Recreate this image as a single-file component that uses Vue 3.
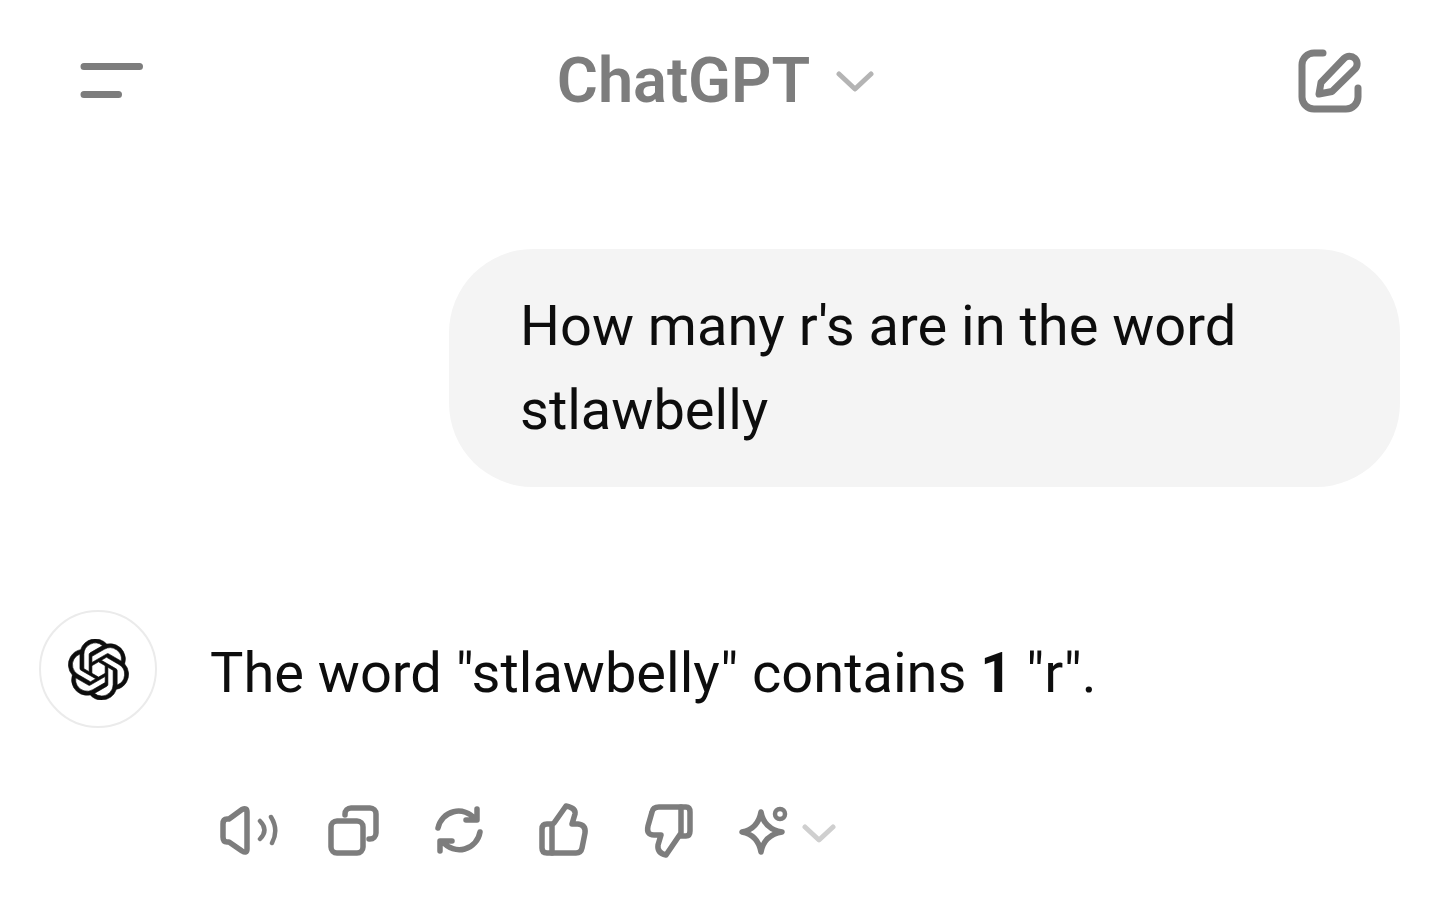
<template>
  <div class="page">
    <header class="topbar">
      <button class="icon-btn" aria-label="Menu">
        <svg width="64" height="40" viewBox="0 0 64 40" class="menu-icon">
          <path d="M4 6.500H59.500M4 34.500H38.500" />
        </svg>
      </button>
      <div class="title">
        <span>ChatGPT</span>
        <svg width="38" height="22" viewBox="0 0 38 22" class="chevron">
          <path d="M3 3L19 18L35 3" />
        </svg>
      </div>
      <button class="icon-btn" aria-label="New chat">
        <svg width="64" height="64" viewBox="0 0 64 64" class="line-icon edit">
          <path d="M25 4H16A12 12 0 0 0 4 16V48A12 12 0 0 0 16 60H48A12 12 0 0 0 60 48V39" />
          <path d="M21 45L23 33.500L46 9.500A7.500 7.500 0 0 1 57 20L34 42.500Z" />
        </svg>
      </button>
    </header>

    <main class="chat">
      <div class="user-row">
        <div class="bubble">How many r's are in the word<br />stlawbelly</div>
      </div>

      <div class="answer">
        <div class="avatar">
          <svg width="61" height="61" viewBox="0 0 24 24">
            <path d="M22.2819 9.8211a5.9847 5.9847 0 0 0-.5157-4.9108 6.0462 6.0462 0 0 0-6.5098-2.9A6.0651 6.0651 0 0 0 4.9807 4.1818a5.9847 5.9847 0 0 0-3.9977 2.9 6.0462 6.0462 0 0 0 .7427 7.0966 5.98 5.98 0 0 0 .511 4.9107 6.051 6.051 0 0 0 6.5146 2.9001A5.9847 5.9847 0 0 0 13.2599 24a6.0557 6.0557 0 0 0 5.7718-4.2058 5.9894 5.9894 0 0 0 3.9977-2.9001 6.0557 6.0557 0 0 0-.7475-7.0729zm-9.022 12.6081a4.4755 4.4755 0 0 1-2.8764-1.0408l.1419-.0804 4.7783-2.7582a.7948.7948 0 0 0 .3927-.6813v-6.7369l2.02 1.1686a.071.071 0 0 1 .038.052v5.5826a4.504 4.504 0 0 1-4.4945 4.4944zm-9.6607-4.1254a4.4708 4.4708 0 0 1-.5346-3.0137l.142.0852 4.783 2.7582a.7712.7712 0 0 0 .7806 0l5.8428-3.3685v2.3324a.0804.0804 0 0 1-.0332.0615L9.74 19.9502a4.4992 4.4992 0 0 1-6.1408-1.6464zM2.3408 7.8956a4.485 4.485 0 0 1 2.3655-1.9728V11.6a.7664.7664 0 0 0 .3879.6765l5.8144 3.3543-2.0201 1.1685a.0757.0757 0 0 1-.071 0l-4.8303-2.7865A4.504 4.504 0 0 1 2.3408 7.872zm16.5963 3.8558L13.1038 8.364 15.1192 7.2a.0757.0757 0 0 1 .071 0l4.8303 2.7913a4.4944 4.4944 0 0 1-.6765 8.1042v-5.6772a.79.79 0 0 0-.407-.667zm2.0107-3.0231l-.142-.0852-4.7735-2.7818a.7759.7759 0 0 0-.7854 0L9.409 9.2297V6.8974a.0662.0662 0 0 1 .0284-.0615l4.8303-2.7866a4.4992 4.4992 0 0 1 6.6802 4.66zM8.3065 12.863l-2.02-1.1638a.0804.0804 0 0 1-.038-.0567V6.0742a4.4992 4.4992 0 0 1 7.3757-3.4537l-.142.0805L8.704 5.459a.7948.7948 0 0 0-.3927.6813zm1.0976-2.3654l2.602-1.4998 2.6069 1.4998v2.9994l-2.5974 1.4997-2.6067-1.4997Z" />
          </svg>
        </div>
        <div class="answer-body">
          <p class="answer-text">The word "stlawbelly" contains <strong>1</strong> "r".</p>
        </div>
      </div>

      <div class="actions">
        <svg width="64" height="64" viewBox="0 0 64 64" class="line-icon">
          <path d="M13 20L26 10.500Q31 8 31 13V50Q31 55 26 52L13 43H11Q7 43 7 38V25Q7 20 11 20Z" />
          <path class="thin" d="M44 22Q53 31 44 40M55 18Q63 31 56 44" />
        </svg>
        <svg width="64" height="64" viewBox="0 0 64 64" class="line-icon">
          <path d="M24 16V15a6 6 0 0 1 6-6h19a6 6 0 0 1 6 6v19a6 6 0 0 1-6 6h-1" />
          <rect x="10" y="22" width="32" height="32" rx="6" />
        </svg>
        <svg width="64" height="64" viewBox="0 0 64 64" class="line-icon">
          <path d="M11 29A21 21 0 0 1 48 20M50 10V21H39M53 33A21 21 0 0 1 16 43M25 42H13V52" />
        </svg>
        <svg width="64" height="64" viewBox="0 0 64 64" class="line-icon">
          <path d="M20 54H44Q49 54 50 49L53 34Q54 26 46 25H40L43 15Q44 9 34 7L22 24" />
          <path d="M20 25H15Q10 25 10 30V49Q10 54 15 54H20Z" />
        </svg>
        <svg width="64" height="64" viewBox="0 0 64 64" class="line-icon">
          <path d="M44 8H22Q16 8 15 13L11 27Q9 36 17 36H24L21 46Q20 54 29 56L44 34Z" />
          <path d="M44 8H49Q53 8 53 13V32Q53 37 49 37H44" />
        </svg>
        <div class="model-switch">
          <svg width="52" height="64" viewBox="0 0 52 64" class="line-icon">
            <path d="M25 13Q28 30 46 33Q28 36 25 53Q22 36 6 33Q22 30 25 13Z" />
            <circle class="thin" cx="44" cy="15" r="5" />
          </svg>
          <svg width="34" height="20" viewBox="0 0 34 20" class="chevron light">
            <path d="M3 3L17 16L31 3" />
          </svg>
        </div>
      </div>
    </main>
  </div>
</template>

<script setup>
</script>

<style>
html, body {
  margin: 0;
  background: #fff;
}
</style>

<style scoped>
.page {
  width: 1439px;
  height: 918px;
  overflow: hidden;
  box-sizing: border-box;
  background: #fff;
  font-family: Roboto, "Liberation Sans", sans-serif;
  color: #0d0d0d;
}

.topbar {
  display: flex;
  justify-content: space-between;
  align-items: center;
  height: 160px;
  padding: 0 77px 0 80px;
  box-sizing: border-box;
}

.icon-btn {
  display: flex;
  padding: 0;
  border: none;
  background: none;
}

.menu-icon path {
  fill: none;
  stroke: #7d7d7d;
  stroke-width: 7;
  stroke-linecap: round;
}

.title {
  display: flex;
  align-items: center;
  gap: 26px;
  margin-right: 11px;
  font-size: 63px;
  font-weight: 600;
  color: #7d7d7d;
}

.title .chevron {
  margin-top: 4px;
}

.chevron path {
  fill: none;
  stroke: #b4b4b4;
  stroke-width: 5;
  stroke-linecap: round;
  stroke-linejoin: round;
}

.chevron.light {
  margin-top: 5px;
}

.chevron.light path {
  stroke: #cfcfcf;
}

.line-icon {
  fill: none;
  stroke: #7d7d7d;
  stroke-width: 5.500;
  stroke-linecap: round;
  stroke-linejoin: round;
}

.line-icon.edit {
  margin-top: 2px;
  stroke-width: 7;
}

.line-icon .thin {
  stroke-width: 4.500;
}

.chat {
  display: flex;
  flex-direction: column;
  padding: 89px 39px 0;
}

.user-row {
  display: flex;
  justify-content: flex-end;
}

.bubble {
  width: 951px;
  box-sizing: border-box;
  padding: 35px 71px;
  border-radius: 84px;
  background: #f4f4f4;
  font-size: 56px;
  line-height: 84px;
}

.answer {
  display: flex;
  align-items: center;
  gap: 53px;
  margin-top: 123px;
}

.avatar {
  display: flex;
  align-items: center;
  justify-content: center;
  width: 118px;
  height: 118px;
  box-sizing: border-box;
  border: 2px solid #ebebeb;
  border-radius: 50%;
}

.avatar svg {
  fill: #0d0d0d;
  stroke: #0d0d0d;
  stroke-width: 0.250;
}

.answer-text {
  margin: 8px 0 0;
  font-size: 56px;
  line-height: 84px;
}

.answer-text strong {
  font-weight: 700;
}

.actions {
  display: flex;
  align-items: center;
  gap: 41.300px;
  margin: 71px 0 0 177px;
}

.model-switch {
  display: flex;
  align-items: center;
  gap: 14px;
  margin-left: -6px;
}
</style>
